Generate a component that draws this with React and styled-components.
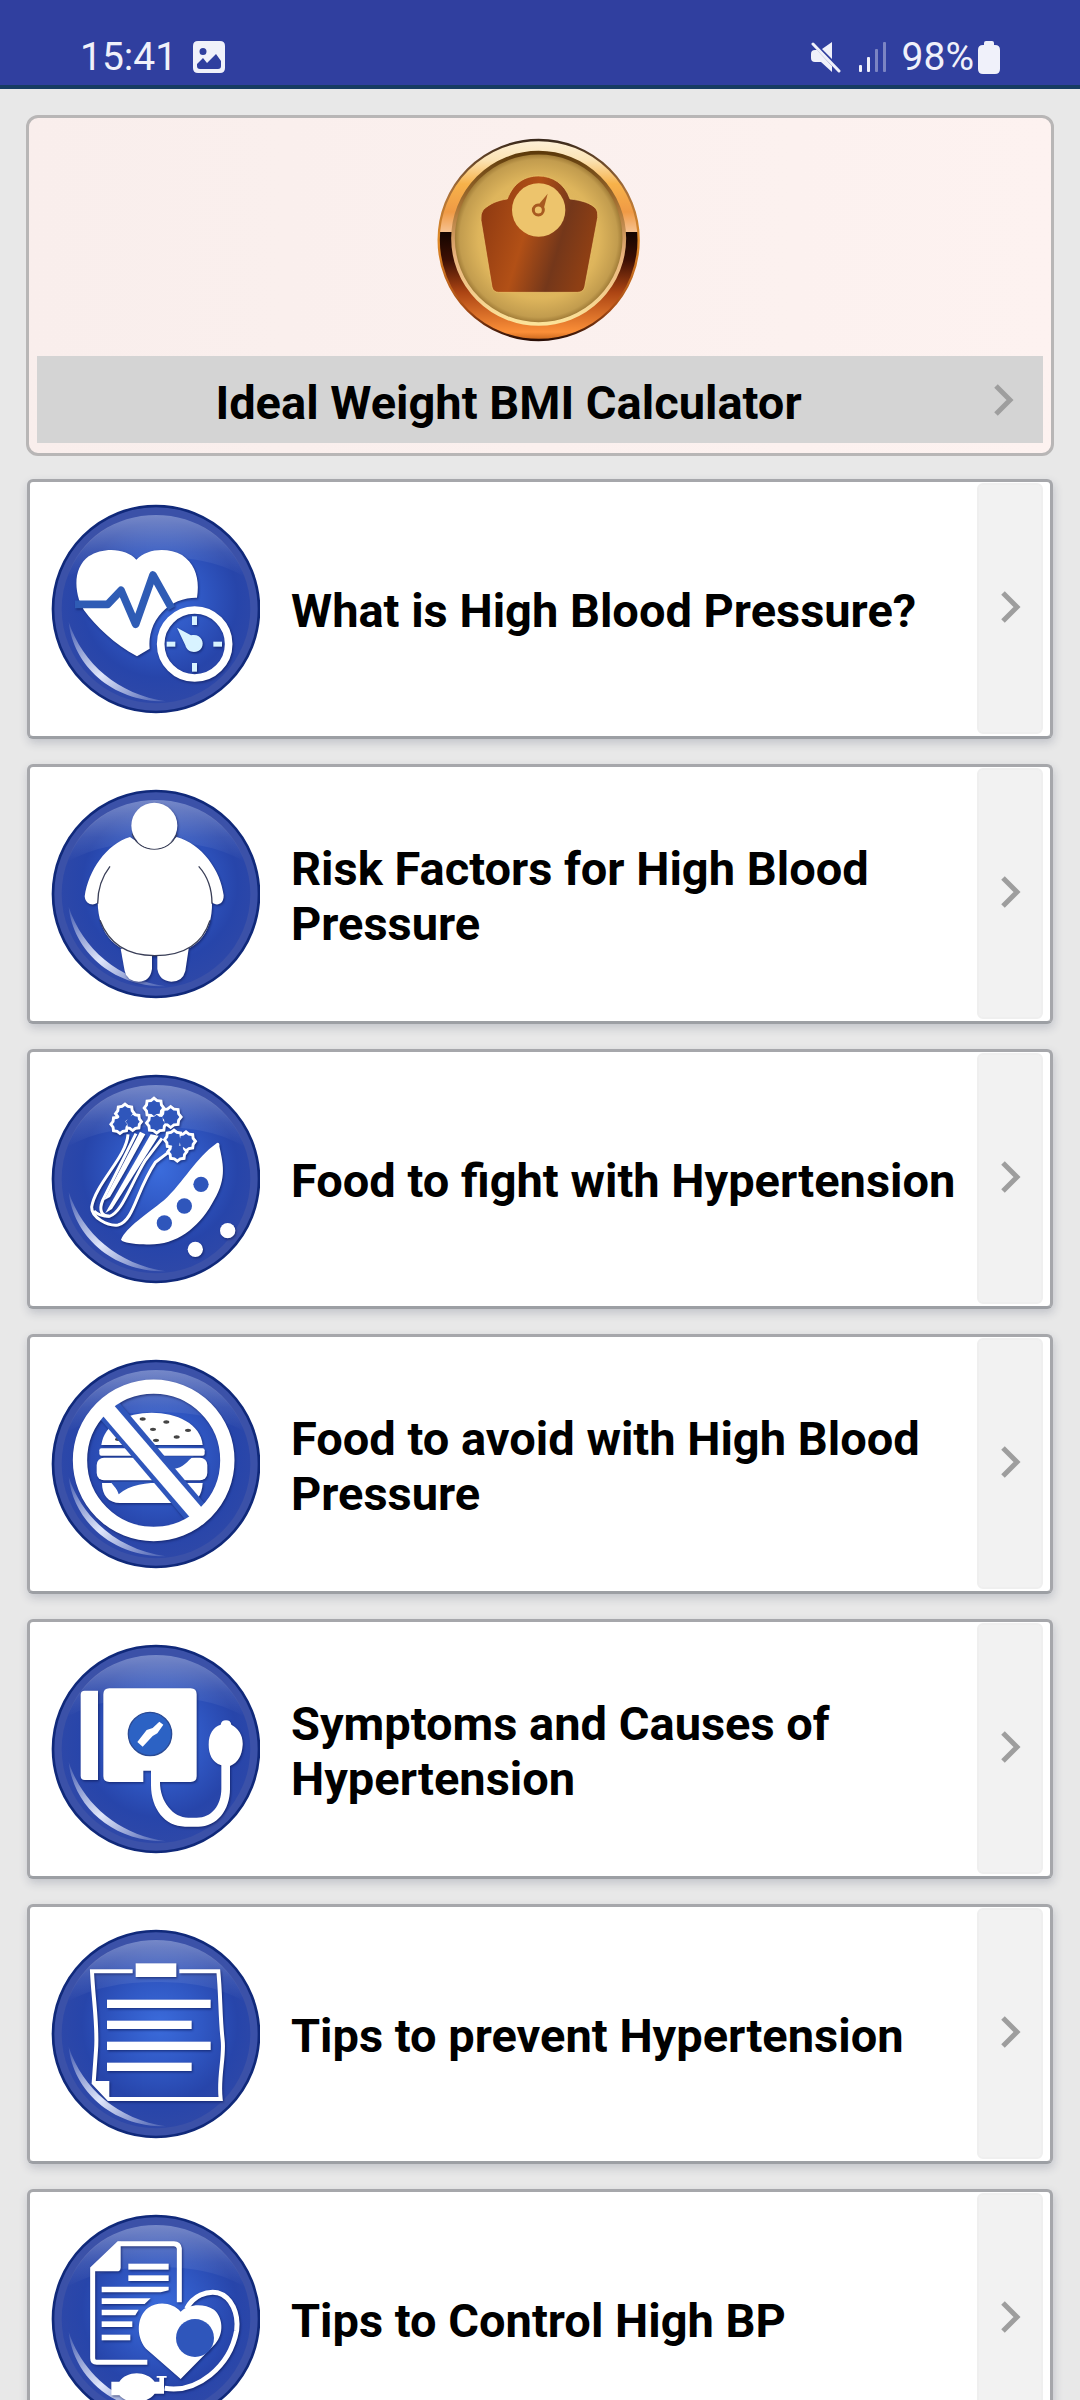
import React from 'react';
import styled, { createGlobalStyle } from 'styled-components';

const GlobalStyle = createGlobalStyle`
  * {
    box-sizing: border-box;
  }

  body {
    margin: 0;
    background: #e8e8e8;
    font-family: Roboto, "Liberation Sans", sans-serif;
  }
`;

const Screen = styled.div`
  height: 100vh;
  display: flex;
  flex-direction: column;
  background: #e8e8e8;
`;

const StatusBar = styled.header`
  flex: none;
  display: flex;
  justify-content: space-between;
  align-items: flex-end;
  padding: 35px 80px 6px;
  background: #303f9f;
  border-bottom: 4px solid #163c62;
  color: #f0f1fa;
  font-size: 39px;
  line-height: 44px;
`;

const StatusGroup = styled.div`
  display: flex;
  align-items: center;
  gap: ${({ $gap }) => $gap}px;
`;

const StatusSvg = styled.svg`
  display: block;
  fill: currentColor;
`;

const Content = styled.main`
  flex: 1;
  min-height: 0;
  overflow-y: auto;
  scrollbar-width: none;
  padding: 26px 26px 24px;
`;

const HeroCard = styled.a`
  display: flex;
  flex-direction: column;
  align-items: center;
  gap: 11px;
  padding: 17px 8px 10px;
  border: 3px solid #b8b6b6;
  border-radius: 12px;
  background: linear-gradient(90deg, #f9eeec, #fdf2f0);
  color: #000;
  text-decoration: none;
`;

const HeroBar = styled.div`
  align-self: stretch;
  display: flex;
  align-items: center;
  height: 87px;
  background: #d4d4d4;
`;

const HeroTitle = styled.h1`
  flex: 1;
  margin: 0;
  padding-top: 6px;
  font-size: 47px;
  line-height: 55px;
  font-weight: 700;
  text-align: center;
`;

const HeroArrow = styled.span`
  display: flex;
  width: 63px;
  padding-left: 12px;
`;

const TopicList = styled.ul`
  display: flex;
  flex-direction: column;
  gap: 25px;
  margin: 23px 0 0;
  padding: 0 1px;
  list-style: none;
`;

const TopicCard = styled.a`
  display: flex;
  align-items: center;
  min-height: 260px;
  padding: 1px 7px 2px 20px;
  border: 3px solid #a6a7ab;
  border-bottom-color: #9c9fa4;
  border-radius: 6px;
  background: #fff;
  box-shadow: 1px 4px 10px rgba(40, 50, 80, 0.2);
  color: #000;
  text-decoration: none;
`;

const TopicTitle = styled.span`
  flex: 1;
  padding: 4px 8px 0 31px;
  font-size: 47px;
  line-height: 55px;
  font-weight: 700;
`;

const TopicArrow = styled.span`
  align-self: stretch;
  display: flex;
  align-items: center;
  width: 66px;
  padding: 0 0 3px 20px;
  border: 2px solid #efefef;
  border-radius: 6px;
  background: #f2f2f2;
`;

const ChevronSvg = styled.svg`
  display: block;
  width: 28px;
  height: 40px;
  fill: none;
  stroke: #9e9e9e;
  stroke-width: 5;
`;

const BadgeSvg = styled.svg`
  flex: none;
  display: block;
  width: 210px;
  height: 210px;
`;

const Glyph = styled.g`
  fill: #fff;
  filter: drop-shadow(3px 4px 3px rgba(8, 20, 80, 0.6));
`;

const SharedDefs = styled.svg`
  position: absolute;
  width: 0;
  height: 0;
`;

const BLUE = '#2f56bb';

function Gradients() {
  return (
    <SharedDefs aria-hidden="true">
      <defs>
        <radialGradient id="badge-fill" cx="0.52" cy="0.45" r="0.55">
          <stop offset="0" stopColor="#3b6cdc" />
          <stop offset="0.4" stopColor="#3058c4" />
          <stop offset="0.75" stopColor="#2745aa" />
          <stop offset="1" stopColor="#2e48a8" />
        </radialGradient>
        <linearGradient id="badge-gloss" x1="0" y1="0" x2="0" y2="1">
          <stop offset="0" stopColor="#fff" stopOpacity="0.36" />
          <stop offset="0.6" stopColor="#fff" stopOpacity="0.1" />
          <stop offset="1" stopColor="#fff" stopOpacity="0" />
        </linearGradient>
        <linearGradient id="badge-shine" x1="0" y1="0" x2="1" y2="1">
          <stop offset="0" stopColor="#fff" stopOpacity="0.1" />
          <stop offset="0.5" stopColor="#e8eeff" stopOpacity="0.95" />
          <stop offset="1" stopColor="#fff" stopOpacity="0.1" />
        </linearGradient>
        <linearGradient id="bezel" x1="0" y1="0" x2="0" y2="1">
          <stop offset="0" stopColor="#fdf0d8" />
          <stop offset="0.1" stopColor="#fbe3b4" />
          <stop offset="0.22" stopColor="#f7b24a" />
          <stop offset="0.36" stopColor="#f09a45" />
          <stop offset="0.46" stopColor="#f6c291" />
          <stop offset="0.462" stopColor="#140500" />
          <stop offset="0.6" stopColor="#3d1004" />
          <stop offset="0.76" stopColor="#ab4413" />
          <stop offset="0.96" stopColor="#fb8f38" />
          <stop offset="1" stopColor="#c8661c" />
        </linearGradient>
        <linearGradient id="bezel-edge" x1="0" y1="0" x2="0" y2="1">
          <stop offset="0" stopColor="#3b2a1c" />
          <stop offset="0.25" stopColor="#a8703a" />
          <stop offset="0.5" stopColor="#e08a28" />
          <stop offset="0.85" stopColor="#a84b14" />
          <stop offset="1" stopColor="#2a0e06" />
        </linearGradient>
        <linearGradient id="bezel-inner" x1="0" y1="0" x2="0" y2="1">
          <stop offset="0" stopColor="#5d3a0a" />
          <stop offset="0.35" stopColor="#b07a3a" />
          <stop offset="0.6" stopColor="#e9b27c" />
          <stop offset="1" stopColor="#fbe39a" />
        </linearGradient>
        <radialGradient id="gold" cx="0.5" cy="0.5" r="0.5">
          <stop offset="0" stopColor="#e9c064" />
          <stop offset="0.7" stopColor="#deb55c" />
          <stop offset="0.92" stopColor="#c29c4e" />
          <stop offset="1" stopColor="#96712f" />
        </radialGradient>
        <linearGradient id="scale-body" x1="0" y1="0.1" x2="1" y2="0.4">
          <stop offset="0" stopColor="#8a3711" />
          <stop offset="0.45" stopColor="#b25016" />
          <stop offset="0.75" stopColor="#74371a" />
          <stop offset="1" stopColor="#8e3f14" />
        </linearGradient>
      </defs>
    </SharedDefs>
  );
}

function Badge({ children }) {
  return (
    <BadgeSvg viewBox="60 56 630 630" aria-hidden="true">
      <circle cx="378" cy="371" r="309" fill="#3b51a8" stroke="#10297a" strokeWidth="8" />
      <circle cx="378" cy="371" r="283" fill="url(#badge-fill)" />
      <path
        d="M112 275 C150 160 255 89 378 89 C500 89 605 160 645 275 C560 225 470 215 378 215 C280 215 190 230 112 275Z"
        fill="url(#badge-gloss)"
      />
      <path
        d="M116 410 C130 540 245 650 408 648 C265 628 158 535 116 410Z"
        fill="url(#badge-shine)"
      />
      <Glyph>{children}</Glyph>
    </BadgeSvg>
  );
}

function HeartGauge() {
  return (
    <g transform="translate(-89 -465)">
      <path d="M408 688 C440 654 502 650 545 674 C588 704 598 750 590 802 A139 139 0 0 0 448 955 L410 978 C342 940 288 890 250 838 L236 808 C220 756 228 706 265 678 C310 648 380 654 408 688Z" />
      <path
        d="M224 822 H322 L362 780 L406 882 L458 734 L514 834"
        fill="none"
        stroke="#2f5cb5"
        strokeWidth="23"
        strokeLinejoin="round"
      />
      <circle cx="583" cy="941" r="102" fill="none" stroke="#fff" strokeWidth="23" />
      <g fill="#d8f3ff">
        <rect x="575" y="858" width="15" height="26" />
        <rect x="575" y="998" width="15" height="26" />
        <rect x="499" y="934" width="26" height="15" />
        <rect x="639" y="934" width="26" height="15" />
        <path d="M530 892 L572 915 C600 908 614 935 604 952 C592 972 560 968 555 945Z" />
      </g>
    </g>
  );
}

function Person() {
  return (
    <g>
      <path d="M272 535 H366 V596 Q360 634 326 634 Q290 632 284 602Z" />
      <path d="M382 535 H476 L466 602 Q458 634 424 634 Q388 632 382 596Z" />
      <path d="M300 200 C345 235 405 235 440 200 C515 220 572 300 581 375 C582 404 558 408 546 396 C548 490 500 556 374 556 C255 556 205 490 203 396 C192 408 166 404 164 378 C176 300 228 222 300 200Z" />
      <g fill="none" stroke="#3a3f58" strokeWidth="4">
        <path d="M240 288 C215 320 203 355 203 400" />
        <path d="M506 288 C535 320 546 355 546 400" />
        <path d="M210 450 C240 530 300 556 374 556 C450 556 515 530 540 450" />
        <path d="M307 190 C325 252 420 252 440 190" />
      </g>
      <circle cx="373" cy="166" r="69" />
    </g>
  );
}

// jagged leaf outline, alternating between two radii
function starPoints(cx, cy, r) {
  const points = [];
  for (let i = 0; i < 16; i++) {
    const radius = i % 2 ? r * 0.82 : r;
    const angle = (Math.PI * i) / 8;
    points.push(`${cx + radius * Math.cos(angle)},${cy + radius * Math.sin(angle)}`);
  }
  return points.join(' ');
}

const leaves = [
  [285, 160, 34], [270, 192, 33], [308, 184, 32],
  [372, 143, 35], [422, 170, 37], [380, 188, 36],
  [432, 238, 34], [468, 243, 34], [442, 274, 34],
];

function Vegetables() {
  return (
    <g transform="translate(0 15)">
      <g fill="none" stroke="#fff" strokeWidth="9">
        <path d="M294 222 C290 290 196 370 185 440 C184 472 234 498 264 494 C312 482 318 392 376 306 L418 274" />
        <path d="M318 220 L218 420 C206 450 214 466 238 468 C276 456 298 380 346 300 L396 234" />
        <path d="M192 452 C206 466 220 468 238 468" />
      </g>
      <path d="M330 214 L346 222 L284 334 L240 410 L222 420Z" />
      <path d="M362 222 L386 226 L246 446 L226 458Z" />
      {leaves.map(([x, y, r]) => (
        <polygon key={`o${x}-${y}`} points={starPoints(x, y, r)} />
      ))}
      <g fill={BLUE}>
        {leaves.map(([x, y, r]) => (
          <polygon key={`i${x}-${y}`} points={starPoints(x, y, r - 11)} />
        ))}
      </g>
      <path d="M558 250 C564 244 570 248 568 258 C582 320 590 360 545 432 C500 510 430 560 340 552 C310 550 280 548 273 538 C290 500 350 462 402 420 C460 366 500 290 558 250Z" />
      <g fill={BLUE}>
        <circle cx="513" cy="372" r="23" />
        <circle cx="463" cy="437" r="23" />
        <circle cx="403" cy="488" r="23" />
      </g>
      <circle cx="593" cy="511" r="23" />
      <circle cx="496" cy="567" r="23" />
    </g>
  );
}

function NoBurger() {
  return (
    <g>
      <path d="M214 314 C222 250 290 217 365 217 C440 217 512 250 518 314Z" />
      <rect x="208" y="324" width="316" height="22" rx="6" />
      <rect x="200" y="352" width="332" height="68" rx="22" />
      <path d="M216 428 H518 C516 465 500 488 470 488 H270 C235 488 216 465 216 428Z" />
      <g fill={BLUE}>
        <path d="M400 348 H492 C470 362 462 384 430 386Z" />
        <path d="M242 424 H400 C350 430 300 430 266 462 C262 446 252 438 242 424Z" />
      </g>
      <g fill="#444">
        <ellipse cx="338" cy="236" rx="9" ry="5" />
        <ellipse cx="409" cy="245" rx="9" ry="5" />
        <ellipse cx="369" cy="267" rx="9" ry="5" />
        <ellipse cx="474" cy="270" rx="9" ry="5" />
        <ellipse cx="440" cy="290" rx="9" ry="5" />
        <ellipse cx="378" cy="300" rx="9" ry="5" />
        <ellipse cx="264" cy="297" rx="9" ry="5" />
      </g>
      <path d="M238 210 L500 520" stroke={BLUE} strokeWidth="76" />
      <path d="M228 202 L506 526" stroke="#fff" strokeWidth="46" />
      <circle cx="371" cy="360" r="221" fill="none" stroke="#fff" strokeWidth="43" />
    </g>
  );
}

function PressureMeter() {
  return (
    <g>
      <path d="M164 196 H204 V464 H164 Q152 464 152 452 V208 Q152 196 164 196Z" />
      <path d="M238 189 H482 Q500 189 500 207 V453 Q500 470 482 470 H390 C390 530 430 577 475 577 H500 C545 577 574 540 574 490 V420 C545 410 536 385 536 358 C536 325 550 305 572 298 Q574 285 588 285 Q602 285 604 298 C626 310 640 330 638 360 C636 390 625 412 600 422 V490 C600 555 560 604 505 604 H465 C405 604 363 550 363 480 V436 H340 V470 H238 Q220 470 220 453 V207 Q220 189 238 189Z" />
      <circle cx="360" cy="326" r="65" fill="#2c62c4" stroke="#2a4a94" strokeWidth="4" />
      <path d="M322 350 L350 314 L368 308 L388 289 L400 298 L382 324 L368 332 L338 364Z" />
    </g>
  );
}

function Clipboard() {
  return (
    <g>
      <path
        d="M308 183 H186 C190 270 204 350 198 420 L191 518 L236 566 H572 C564 500 584 440 578 390 C570 320 572 250 565 183 H448"
        fill="none"
        stroke="#fff"
        strokeWidth="12"
      />
      <path d="M186 512 H238 V570Z" />
      <rect x="317" y="159" width="122" height="41" />
      <rect x="231" y="268" width="311" height="25" />
      <rect x="231" y="331" width="254" height="25" />
      <rect x="231" y="394" width="311" height="25" />
      <rect x="231" y="457" width="254" height="25" />
    </g>
  );
}

function ReportHeart() {
  return (
    <g transform="translate(0 -45)">
      <path
        d="M352 546 H200 Q188 546 188 534 V265 L266 190 H432 Q446 190 448 204 V366"
        fill="none"
        stroke="#fff"
        strokeWidth="15"
      />
      <path d="M182 273 L264 184 H272 V262 Q272 273 260 273Z" />
      <rect x="295" y="250" width="121" height="18" />
      <rect x="295" y="285" width="121" height="17" />
      <path d="M215 319 H416 V330 L392 336 H215Z" />
      <path d="M215 354 H362 L344 371 H215Z" />
      <path d="M215 388 H326 L316 405 H215Z" />
      <rect x="215" y="423" width="92" height="17" />
      <rect x="215" y="463" width="86" height="17" />
      <path d="M452 394 C475 372 520 368 552 388 C580 412 582 460 556 490 L452 596 L348 505 C315 465 322 405 355 382 C390 360 430 370 452 394Z" />
      <circle cx="495" cy="473" r="57" fill={BLUE} />
      <path
        d="M470 385 C490 345 530 332 562 337 C606 350 626 400 620 450 C600 560 500 640 404 624"
        fill="none"
        stroke="#fff"
        strokeWidth="15"
      />
      <path d="M244 604 H268 C290 570 350 570 374 604 H388 V592 H380 V587 H410 V592 H402 V640 H374 C350 672 290 672 268 645 H244Z" />
    </g>
  );
}

function ScaleBadge() {
  return (
    <BadgeSvg viewBox="105 74 630 630" aria-hidden="true">
      <circle cx="416" cy="389" r="300" fill="url(#bezel)" stroke="url(#bezel-edge)" strokeWidth="7" />
      <circle cx="416" cy="384" r="257" fill="url(#gold)" stroke="url(#bezel-inner)" strokeWidth="11" />
      <path
        d="M322 266 C340 218 375 197 415 197 C458 197 494 220 510 266 C545 270 572 278 588 295 Q595 303 593 322 L554 530 Q550 546 532 546 H296 Q280 546 276 530 L243 330 Q241 308 250 298 C270 280 292 270 322 266Z"
        fill="url(#scale-body)"
        stroke="#f0c96e"
        strokeWidth="2"
      />
      <circle cx="416" cy="299" r="80" fill="#edc46c" />
      <circle cx="415" cy="299" r="15" fill="none" stroke="#a85a20" strokeWidth="9" />
      <path d="M418 280 L443 250 L432 292Z" fill="#a85a20" />
    </BadgeSvg>
  );
}

function Chevron() {
  return (
    <ChevronSvg viewBox="0 0 28 40" aria-hidden="true">
      <path d="M4 6 L18 20 L4 34" />
    </ChevronSvg>
  );
}

const topics = [
  { title: 'What is High Blood Pressure?', Icon: HeartGauge },
  { title: 'Risk Factors for High Blood Pressure', Icon: Person },
  { title: 'Food to fight with Hypertension', Icon: Vegetables },
  { title: 'Food to avoid with High Blood Pressure', Icon: NoBurger },
  { title: 'Symptoms and Causes of Hypertension', Icon: PressureMeter },
  { title: 'Tips to prevent Hypertension', Icon: Clipboard },
  { title: 'Tips to Control High BP', Icon: ReportHeart },
];

function App() {
  return (
    <Screen>
      <GlobalStyle />
      <Gradients />
      <StatusBar>
        <StatusGroup $gap={16}>
          <span>15:41</span>
          <StatusSvg width="32" height="32" viewBox="0 0 32 32" aria-hidden="true">
            <path
              fillRule="evenodd"
              d="M5 0H27Q32 0 32 5V27Q32 32 27 32H5Q0 32 0 27V5Q0 0 5 0ZM10 7A3.5 3.5 0 1 0 10 14A3.5 3.5 0 1 0 10 7ZM4 25Q4 28 7 28H25Q28 28 28 25V20L23 13L14 22L10 17L4 23Z"
            />
          </StatusSvg>
        </StatusGroup>
        <StatusGroup $gap={16}>
          <StatusSvg width="32" height="32" viewBox="0 0 32 32" aria-hidden="true">
            <path d="M22 1V18L12 8ZM7 9L22 25V31L11 21H5Q1 21 1 17V13Q1 9 5 9Z" />
            <path d="M3 3L29 30" stroke="currentColor" strokeWidth="3" strokeLinecap="round" />
          </StatusSvg>
          <StatusSvg width="28" height="30" viewBox="0 0 28 30" aria-hidden="true">
            <rect x="1" y="23" width="3" height="7" rx="1" />
            <rect x="9" y="15" width="3" height="15" rx="1" />
            <rect x="17" y="7" width="3" height="23" rx="1" opacity="0.4" />
            <rect x="25" y="0" width="3" height="30" rx="1" opacity="0.4" />
          </StatusSvg>
          <StatusGroup $gap={4}>
            <span>98%</span>
            <StatusSvg width="22" height="33" viewBox="0 0 22 33" aria-hidden="true">
              <path d="M8 0H14Q16 0 16 2V4H17Q22 4 22 9V28Q22 33 17 33H5Q0 33 0 28V9Q0 4 5 4H6V2Q6 0 8 0Z" />
            </StatusSvg>
          </StatusGroup>
        </StatusGroup>
      </StatusBar>
      <Content>
        <HeroCard href="#bmi">
          <ScaleBadge />
          <HeroBar>
            <HeroTitle>Ideal Weight BMI Calculator</HeroTitle>
            <HeroArrow>
              <Chevron />
            </HeroArrow>
          </HeroBar>
        </HeroCard>
        <TopicList>
          {topics.map(({ title, Icon }, index) => (
            <li key={title}>
              <TopicCard href={`#topic-${index + 1}`}>
                <Badge>
                  <Icon />
                </Badge>
                <TopicTitle>{title}</TopicTitle>
                <TopicArrow>
                  <Chevron />
                </TopicArrow>
              </TopicCard>
            </li>
          ))}
        </TopicList>
      </Content>
    </Screen>
  );
}

export default App;
